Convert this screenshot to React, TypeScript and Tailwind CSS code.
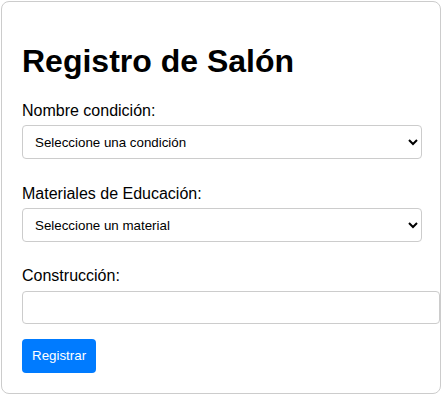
const App = () => {
  return (
    <div className="min-h-[400px] bg-white pt-px pl-px font-['Liberation_Sans',Arial,sans-serif] text-black">
      <div className="w-[440px] rounded-[8px] border border-[#cccccc] p-5">
        <h1 className="my-[21.44px] text-[32px] leading-[36.8px] font-bold">Registro de Salón</h1>
        <form action="">
          <div className="mb-[26px]">
            <label className="mb-[5px] block text-base leading-[18.4px]">Nombre condición:</label>
            <select
              className="block h-[34px] w-[400px] rounded-[4px] border border-[#cccccc] bg-white px-2 text-[13.33px] text-black"
              defaultValue=""
            >
              <option value="">Seleccione una condición</option>
            </select>
          </div>
          <div className="mb-[25px]">
            <label className="mb-[5px] block text-base leading-[18.4px]">Materiales de Educación:</label>
            <select
              className="block h-[34px] w-[400px] rounded-[4px] border border-[#cccccc] bg-white px-2 text-[13.33px] text-black"
              defaultValue=""
            >
              <option value="">Seleccione un material</option>
            </select>
          </div>
          <div className="mb-[15px]">
            <label className="mb-[5px] block text-base leading-[18.4px]">Construcción:</label>
            <input
              type="text"
              className="block h-[33px] w-[418px] rounded-[4px] border border-[#cccccc] px-2 text-[13.33px] outline-none"
            />
          </div>
          <button className="h-[34px] rounded-[4px] bg-[#007bff] px-[10px] text-[13.33px] text-white">
            Registrar
          </button>
        </form>
      </div>
    </div>
  )
}

export default App
